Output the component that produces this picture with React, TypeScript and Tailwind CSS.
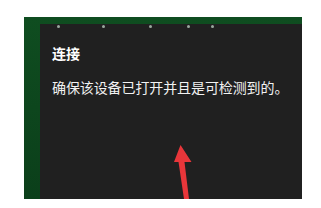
import React from 'react';

// dot offsets inside the panel
const dots = [17, 62, 109, 147, 171];

export default function App() {
  return (
    <div className="w-[321px] h-[208px] bg-white pt-[17px] pl-[24px]">
      <div className="w-[278px] h-[182px] bg-gradient-to-b from-[#0f4d20] to-[#0b3f1a] pt-[7px] pl-[16px]">
        <div
          className="relative flex flex-col w-[262px] h-[175px] bg-[#202020] pl-[12px] text-white"
          style={{ fontFamily: '"Noto Sans CJK SC", "Noto Sans", sans-serif' }}
        >
          {dots.map(x => (
            <span
              key={x}
              className="absolute top-[1px] w-[3px] h-[3px] rounded-full bg-[#9aa89e]"
              style={{ left: x }}
            />
          ))}
          <div className="mt-[19px] text-[14px] font-bold leading-[20px]">连接</div>
          <div className="mt-[14px] text-[14px] leading-[20px] tracking-[-0.1px] text-[#f2f2f2]">
            确保该设备已打开并且是可检测到的。
          </div>
          <svg className="absolute left-[130px] top-[118px]" width="26" height="60" viewBox="0 0 26 60">
            <path d="M10.5 3 L4 20 L8.5 20 L14 57 L19 57 L14.5 20 L21.5 20 Z" fill="#e8363a" />
          </svg>
        </div>
      </div>
    </div>
  );
}
